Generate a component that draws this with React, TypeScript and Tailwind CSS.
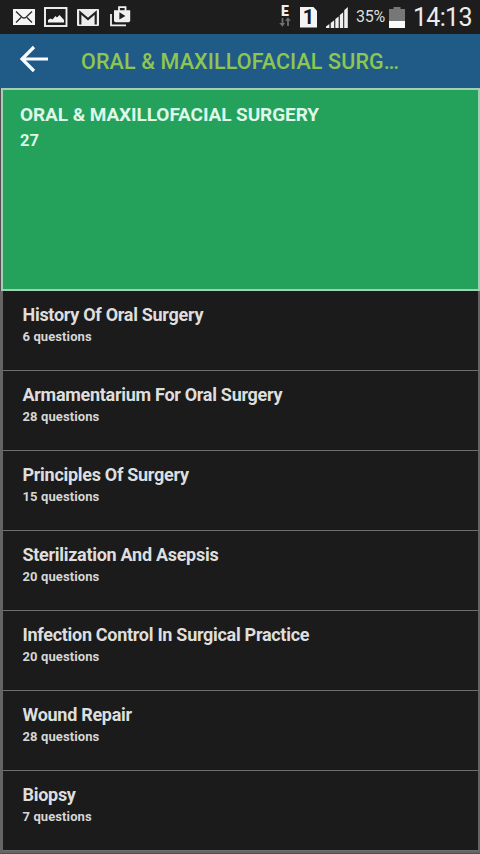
import React from 'react';

interface Topic {
  title: string;
  questions: number;
}

const TOPICS: Topic[] = [
  { title: 'History Of Oral Surgery', questions: 6 },
  { title: 'Armamentarium For Oral Surgery', questions: 28 },
  { title: 'Principles Of Surgery', questions: 15 },
  { title: 'Sterilization And Asepsis', questions: 20 },
  { title: 'Infection Control In Surgical Practice', questions: 20 },
  { title: 'Wound Repair', questions: 28 },
  { title: 'Biopsy', questions: 7 },
];

const NotificationIcons = () => (
  <div className="flex items-center h-full">
    {/* mail */}
    <svg className="ml-[13px] w-[22px] h-[16px]" viewBox="0 0 22 16">
      <rect width="22" height="16" fill="#f4f4f4" />
      <path d="M3 2.5 L9 8.2 Q11 9.8 13 8.2 L19 2.5 M3 13.5 L8 8.5 M19 13.5 L14 8.5" fill="none" stroke="#2a2a2a" strokeWidth="1.3" />
    </svg>
    {/* picture */}
    <svg className="ml-[9px] w-[24px] h-[20px]" viewBox="0 0 24 20">
      <rect x="1" y="1" width="21.5" height="18" fill="none" stroke="#f4f4f4" strokeWidth="1.9" />
      <path d="M4 15.5 V13 L6.5 11.5 L8.5 12.5 L11.5 9 L13 10.5 L15.5 8 L20 13 V15.5 Z" fill="#f4f4f4" />
    </svg>
    {/* gmail */}
    <svg className="ml-[9px] w-[22px] h-[17px]" viewBox="0 0 22 17">
      <rect width="22" height="17" rx="1" fill="#ededed" />
      <path d="M3.3 15.5 V3.5 L11 10 L18.7 3.5 V15.5" fill="none" stroke="#222" strokeWidth="2.2" />
    </svg>
    {/* play store bag */}
    <svg className="ml-[11px] w-[21px] h-[21px] -mt-0.5" viewBox="0 0 21 21">
      <path d="M1 8 V19.3 H16" fill="none" stroke="#f0f0f0" strokeWidth="1.8" />
      <path d="M9 5 V1.2 H15.5 V5" fill="none" stroke="#f0f0f0" strokeWidth="1.8" />
      <path d="M4 4.2 H20.2 V14.5 Q20.2 16.2 18.5 16.2 H5.7 Q4 16.2 4 14.5 Z" fill="#f0f0f0" />
      <path d="M9.4 6.3 V13.6 L15.4 10 Z" fill="#1e1e1e" />
    </svg>
  </div>
);

const SystemIcons = () => (
  <div className="flex items-center h-full">
    <div className="flex flex-col items-center w-[12px] mr-[9px] -mt-0.5">
      <span className="h-[12px] text-[14px] leading-[12px] font-black text-[#f0f0f0]">E</span>
      <svg className="w-[12px] h-[10px]" viewBox="0 0 12 10">
        <path d="M2.6 1 V6 H0.2 L3.5 9.8 L6 6 H4.4 V1 Z" fill="#707070" />
        <path d="M8.1 9 V3.8 H6 L8.9 0.2 L11.9 3.8 H9.9 V9 Z" fill="#707070" />
      </svg>
    </div>
    <div className="flex items-center justify-center w-[17px] h-[21px] bg-[#f4f4f4] text-[#1a1a1a] text-[20px] leading-[21px] font-bold [clip-path:polygon(0_0,76%_0,100%_20%,100%_100%,0_100%)]">
      1
    </div>
    <svg className="ml-[9px] w-[22px] h-[21px]" viewBox="0 0 21 21" preserveAspectRatio="none">
      <path d="M0 21 V19.5 L3.2 17 V21 Z M4.5 21 V16 L7.8 13.2 V21 Z M8.9 21 V12 L12.1 9.4 V21 Z M13.2 21 V8 L16.4 5.2 V21 Z M17.4 21 V3.2 L20.8 0 V21 Z" fill="#f0f0f0" />
    </svg>
    <span className="ml-[8px] w-[30px] text-[16px] leading-none whitespace-nowrap text-[#dedede] tracking-[-0.2px]">35%</span>
    <svg className="ml-[3px] w-[16px] h-[21px]" viewBox="0 0 16 21">
      <path d="M0 2 H4.5 V0 H11.5 V2 H16 V14 H0 Z" fill="#777" />
      <rect y="14" width="16" height="7" fill="#fafafa" />
    </svg>
    <span className="ml-[8px] w-[67px] text-[25px] leading-none whitespace-nowrap text-[#ededed] tracking-[-0.7px]">14:13</span>
  </div>
);

const TopicRow: React.FC<{ topic: Topic }> = ({ topic }) => (
  <li className="h-20 pl-[19.5px] pt-3 border-b border-[#6f6f6f]">
    <h2 className="text-[18px] leading-[23px] font-bold text-[#dedede] whitespace-nowrap tracking-[-0.29px]">{topic.title}</h2>
    <p className="text-[13px] leading-[21px] font-bold text-[#d6d6d6] whitespace-nowrap tracking-[0.1px]">{topic.questions} questions</p>
  </li>
);

export default function App() {
  return (
    <div className="w-[480px] h-[854px] flex flex-col overflow-hidden bg-[#505050] font-[Roboto,sans-serif]">
      <div className="h-[34px] shrink-0 flex items-center justify-between bg-[#1d1d1d]">
        <NotificationIcons />
        <SystemIcons />
      </div>

      <header className="h-[54px] shrink-0 flex items-center bg-[#205b87]">
        <svg className="ml-[19px] w-[30px] h-[28px] -mt-1" viewBox="0 0 30 28">
          <path d="M29 14 H3 M15 2 L3 14 L15 26" fill="none" stroke="#fafdff" strokeWidth="3.2" />
        </svg>
        <h1 className="ml-8 pt-px text-[21.5px] leading-[28px] font-medium text-[#8fc650] whitespace-nowrap tracking-[0.12px]">
          ORAL &amp; MAXILLOFACIAL SURG…
        </h1>
      </header>

      <section className="h-[203px] shrink-0 ml-px border-2 border-[#a3d0b4] bg-[#24a25c] pl-[17px] pt-[12px]">
        <h2 className="text-[19px] leading-[26px] font-bold text-[#ddf7e8] whitespace-nowrap tracking-[-0.08px]">ORAL &amp; MAXILLOFACIAL SURGERY</h2>
        <p className="text-[16.5px] leading-[25px] font-bold text-[#ddf7e8]">27</p>
      </section>

      <ul className="shrink-0 border-l-3 border-r-2 border-b-2 border-[#656565] bg-[#1b1b1b]">
        {TOPICS.map((topic) => (
          <TopicRow key={topic.title} topic={topic} />
        ))}
      </ul>
    </div>
  );
}
